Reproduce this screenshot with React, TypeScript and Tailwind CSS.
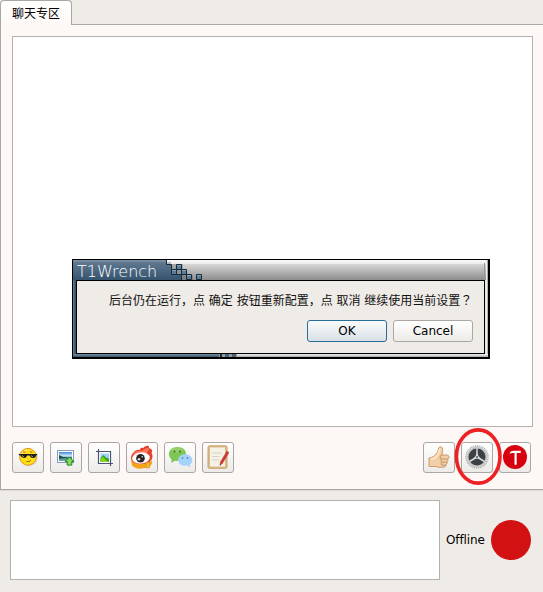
import type { ReactNode } from 'react';

function ToolButton({ children }: { children: ReactNode }) {
  return (
    <button className="flex h-[31px] w-8 shrink-0 items-start justify-center rounded-[3px] border border-[#a9a6a3] bg-linear-to-b from-white to-[#edebe8]">
      {children}
    </button>
  );
}

function CoolFace() {
  return (
    <svg className="mt-1" width="20" height="20" viewBox="0 0 20 20">
      <ellipse cx="11" cy="11" rx="8.8" ry="8.3" fill="#dcd5cd" />
      <circle cx="10" cy="9.800" r="8.400" fill="#ffdf16" stroke="#e39a20" strokeWidth="1" />
      <path d="M4 6Q6 2.500 11 2.500Q7 4 6 6.500Z" fill="#fff68b" />
      <path d="M5 5h2.500M12 5h2.500" stroke="#c0501c" strokeWidth="1" />
      <path d="M.8 7h18.400v1.300h-1q-.6 2.800-3.500 2.800-2.400 0-3-2.500H9.200q-.8 2.500-3.300 2.500-2.600 0-3.500-2.800h-1.600z" fill="#1c1c1c" />
      <path d="M4 8.500l2 1.500M13 8.500l2 1.500" stroke="#a8a8a8" strokeWidth=".9" />
      <path d="M8.500 14.500q3.500.6 4.500-1.500" fill="none" stroke="#b05a10" strokeWidth="1" />
    </svg>
  );
}

function PictureUpload() {
  return (
    <svg className="mt-[7px]" width="18" height="16" viewBox="0 0 18 16">
      <defs>
        <linearGradient id="sky" x2="0" y2="1">
          <stop stopColor="#3e86da" />
          <stop offset=".45" stopColor="#d8eef6" />
          <stop offset=".6" stopColor="#3a7a80" />
          <stop offset="1" stopColor="#76afb6" />
        </linearGradient>
      </defs>
      <rect x=".5" y=".5" width="16" height="12" fill="#fff" stroke="#8998b9" />
      <rect x="2" y="2" width="13" height="9" fill="url(#sky)" />
      <path d="M2 5l4 2 5 .8-9 .7z" fill="#174c4b" />
      <path d="M12.500 7l4.300 4.400h-2v3.700h-4.600v-3.700h-2z" fill="#86da5c" stroke="#218520" />
    </svg>
  );
}

function CropPicture() {
  return (
    <svg className="mt-[6px]" width="17" height="17" viewBox="0 0 17 17">
      <rect x="3" y="3" width="11" height="11" fill="#fff" />
      <rect x="4.500" y="4.500" width="8.500" height="8.500" fill="#9ed0fb" />
      <path d="M4.500 9l3-3 3 3 1-.5 1.500 2V13H4.500z" fill="#35a718" />
      <path d="M4.500 10l3-2 2 3 3.500 2H4.500z" fill="#8bd51d" />
      <path d="M2.500 0v14.500H17M0 2.500h14.500V17" fill="none" stroke="#4b5377" strokeWidth="1.200" />
    </svg>
  );
}

function Weibo() {
  return (
    <svg className="mt-[2px]" width="24" height="25" viewBox="0 0 24 25">
      <path d="M1 15Q7 21 15 18L22 16Q23 20 18 22.500Q6 25.500 2 20.500Z" fill="#f3a41b" />
      <path d="M3 8Q6 4 10 5Q10 2 13 3Q16 0 19 1Q18 3 21 4Q23 5 21.500 8Q23.500 11 21.500 15Q18 19 11 19Q2 19 1 14Q1 10 3 8Z" fill="#e5402a" />
      <path d="M4 8Q7 5 12 6Q17 1 19 4L17 8Q9 6 3 12Z" fill="#ff7859" />
      <path d="M16 17.500h3.500V23H16z" fill="#f8b52c" stroke="#d08a1a" strokeWidth=".5" />
      <ellipse cx="11" cy="13" rx="8.900" ry="5.600" fill="#fff" transform="rotate(-6 11 13)" />
      <circle cx="10.500" cy="13.200" r="4.300" fill="#292323" />
      <circle cx="9" cy="14.200" r="1.300" fill="#ddd" />
      <circle cx="12.200" cy="11.800" r=".8" fill="#ddd" />
    </svg>
  );
}

function Wechat() {
  return (
    <svg className="mt-[3px]" width="25" height="22" viewBox="0 0 25 22">
      <path d="M9.500 1C14.800 1 18 4 18 8.200S14 15 9.500 15l-2.700-.3L3 17l.7-3.500C1.800 12.200 1 10.500 1 8.100 1 4 4.400 1 9.500 1z" fill="#7fc653" />
      <ellipse cx="9" cy="4" rx="6" ry="2.500" fill="#a2da78" opacity=".6" />
      <path d="M17 8.300c4.500 0 7.300 2.500 7.300 5.800 0 2-.9 3.600-2.400 4.600l.6 2.600-3-1.700c-5.700.9-9.300-1.700-9.300-5.400 0-3.400 3-5.900 6.800-5.900z" fill="#a6d3fa" />
      <g fill="#3a5a30"><circle cx="6.500" cy="5.500" r=".9" /><circle cx="12" cy="5.500" r=".9" /></g>
      <g fill="#3a6288"><circle cx="14.500" cy="12" r=".8" /><circle cx="19.500" cy="12" r=".8" /></g>
    </svg>
  );
}

function NotePad() {
  return (
    <svg className="mt-[2px]" width="23" height="24" viewBox="0 0 23 24">
      <rect x="1" y=".8" width="19" height="22.500" rx="1.500" fill="#dcbb8d" stroke="#c8a06c" />
      <path d="M3 2.500h15v19H3z" fill="#f6f1e5" />
      <path d="M5.500 8h9M5.500 11.500h7M5.500 15h7" stroke="#cfc9bd" strokeWidth="1" strokeDasharray="2 .6" />
      <path d="M19.900 6.200l2.100 1.200-6.400 10.800-2.600 2 .4-3.300z" fill="#cf3833" stroke="#a92c29" strokeWidth=".4" />
      <path d="M12.700 20.700l.4-1.800 1.100.7z" fill="#443" />
    </svg>
  );
}

function ThumbUp() {
  return (
    <svg className="mt-[3px]" width="22" height="23" viewBox="0 0 22 23">
      <path d="M1 12q3-.5 5-1.700Q10 7 10.500 3 10.700.8 12.300.8q3 0 2.300 4.700L14 9h5q2 .3 2 2t-1.300 2q1 1.500-.7 3 .7 1.800-1 2.800.2 2-2.300 2.400-4.700.6-8.700-.8L1 20.500z" fill="#f3cfa8" stroke="#c08c5c" strokeWidth=".8" />
      <path d="M3 13q5-.5 7-4.500l2-6" fill="none" stroke="#ffe4c4" strokeWidth="1.800" />
      <path d="M14 9q-2 .5-2 2t2 2h5.500M13.500 13q-1.500 1.600.3 3.200H19M13.500 16.400q-1.200 1.600.5 2.800h4" fill="none" stroke="#c08a58" strokeWidth=".9" />
    </svg>
  );
}

function GearWheel() {
  return (
    <svg className="mt-[2px]" width="24" height="24" viewBox="0 0 24 24">
      <circle cx="12" cy="12" r="11" fill="none" stroke="#adadad" strokeWidth="1.400" strokeDasharray="1.200 .7" />
      <circle cx="12" cy="12" r="9.400" fill="#3e4144" stroke="#c6c6c6" strokeWidth="1.800" />
      <path d="M12 3V12L4.500 16.500M12 12l7.500 4.500" fill="none" stroke="#d8d8d8" strokeWidth="1.500" />
      <path d="M12 7.500l1.500 3.500 2.600 3.300-4.100-.8-4.100.8 2.600-3.300z" fill="#dcdcdc" />
      <circle cx="12" cy="12" r="1" fill="#54575a" />
    </svg>
  );
}

function HammerBadge() {
  return (
    <svg className="mt-[2px]" width="24" height="24" viewBox="0 0 24 24">
      <circle cx="12" cy="12" r="12" fill="#d7000f" />
      <path d="M6.500 8.800Q7.300 5.700 10.500 5.700h7.200v2.200h-4v11q0 1.100-1.100 1.100t-1.100-1.100v-11h-1.700Q7.800 7.900 6.500 8.800Z" fill="#fff" />
    </svg>
  );
}

function TitleDecoration() {
  return (
    <svg className="h-5 w-[415px]" viewBox="0 0 415 20">
      <defs>
        <linearGradient id="silver" x2="0" y2="1">
          <stop stopColor="#fafafa" /><stop offset=".18" stopColor="#ededed" />
          <stop offset=".22" stopColor="#d6d6d6" /><stop offset="1" stopColor="#8c8c8c" />
        </linearGradient>
        <linearGradient id="steel" x2="0" y2="1">
          <stop stopColor="#8295a9" /><stop offset=".15" stopColor="#5d768e" /><stop offset="1" stopColor="#36546e" />
        </linearGradient>
      </defs>
      <rect width="415" height="20" fill="url(#silver)" />
      <path d="M94 2h4v2h12v6h4v5h6v5H98z" fill="#555" opacity=".35" />
      <path d="M0 0h93v4h5v5h5v5h5v6H0z" fill="url(#steel)" />
      <path d="M93.500 0v4.500h5v5M103.500 14.500h5V20" fill="none" stroke="#142b3c" />
      <rect x="104" y="10" width="4" height="4" fill="#8d9196" />
      <g fill="#5c7b95" stroke="#142b3c">
        <path d="M103.500 4.500h5v5h-5zM98.500 9.500h5v5h-5zM108.500 9.500h5v5h-5zM113.500 14.500h5v5h-5zM123.500 14.500h5v5h-5z" />
      </g>
      <path d="M104 5.500h4M99 10.500h4M109 10.500h4M114 15.500h4M124 15.500h4" stroke="#8aa6bc" />
      <path d="M411.500 3v17" stroke="#999" /><path d="M413.500 0v20" stroke="#f0f0f0" /><path d="M414.500 0v20" stroke="#aaa" />
    </svg>
  );
}

function Dialog() {
  return (
    <section className="absolute left-[72px] top-[259px] h-[100px] w-[418px] border-y border-l border-r-2 border-b-2 border-black bg-[#bcbcbc]">
      <header className="relative h-5">
        <div className="absolute left-0 top-0"><TitleDecoration /></div>
        <h1 className="relative whitespace-nowrap pl-1 pt-0.5 font-['DejaVu_Sans'] text-[16px] font-extralight leading-5 text-white">T1Wrench</h1>
      </header>
      <div className="flex h-[74px]">
        <div className="w-[3px] bg-linear-to-r from-[#6f879b] via-[#3f607a] to-[#355169]" />
        <div className="flex w-[409px] flex-col border border-black bg-[#efebe7]">
          <p className="mt-[12px] h-4 whitespace-nowrap pl-8 text-[12px] leading-4 text-[#111]">
            后台仍在运行，点 确定 按钮重新配置，点 取消 继续使用当前设置<span lang="zh-TW" className="font-['DejaVu_Sans','Noto_Sans_CJK_TC',sans-serif]">？</span>
          </p>
          <div className="mr-[11px] mt-[11px] flex justify-end gap-[6px] font-['DejaVu_Sans'] text-[12px] leading-none text-black">
            <button className="h-[22px] w-20 rounded-[3px] border border-[#286c9a] bg-linear-to-b from-[#fafbfc] to-[#d9e0e5]">OK</button>
            <button className="h-[22px] w-20 rounded-[3px] border border-[#aaa7a4] bg-linear-to-b from-white to-[#edebe8]">Cancel</button>
          </div>
        </div>
        <div className="w-[3px] bg-linear-to-r from-[#ddd] via-[#f0f0f0] to-[#999]" />
      </div>
      <div className="flex h-[3px]">
        <div className="w-[146px] bg-linear-to-b from-[#7890a3] to-[#36546d]" />
        <div className="flex w-[18px] gap-[3px] bg-[#999] pl-[1px]"><i className="w-[2px] bg-[#142b3c]" /><i className="w-[4px] bg-[#46647d]" /><i className="w-[4px] bg-[#46647d]" /></div>
        <div className="flex-1 bg-linear-to-b from-[#f5f5f5] to-[#aaa]" />
      </div>
    </section>
  );
}

export default function App() {
  return (
    <main className="relative flex h-[592px] w-[543px] flex-col overflow-hidden bg-[#efebe7] font-['DejaVu_Sans','Noto_Sans_CJK_SC',sans-serif]">
      <nav className="flex h-[25px]">
        <div className="z-10 w-[72px] rounded-t-[4px] border border-b-0 border-[#aaa6a2] bg-linear-to-b from-white to-[#fdf8f5] pl-[11px] pt-[5px] text-[12px] leading-4 text-black">聊天专区</div>
        <div className="flex-1 border-b border-[#aaa6a2]" />
      </nav>
      <section className="flex h-[465px] flex-col border-b border-l border-[#aaa6a2] bg-[#fdf8f5] pl-[11px] pr-[10px] pt-[11px] shadow-[0_1px_0_#dedad7]">
        <div className="h-[391px] shrink-0 border border-[#b5b1ae] bg-white" />
        <div className="-mr-0.5 mt-[15px] flex justify-between pr-[4px]">
          <div className="flex gap-[6px]">
            <ToolButton><CoolFace /></ToolButton>
            <ToolButton><PictureUpload /></ToolButton>
            <ToolButton><CropPicture /></ToolButton>
            <ToolButton><Weibo /></ToolButton>
            <ToolButton><Wechat /></ToolButton>
            <ToolButton><NotePad /></ToolButton>
          </div>
          <div className="flex gap-[6px]">
            <ToolButton><ThumbUp /></ToolButton>
            <ToolButton><GearWheel /></ToolButton>
            <ToolButton><HammerBadge /></ToolButton>
          </div>
        </div>
      </section>
      <footer className="flex flex-1 items-start pl-[10px] pt-[10px]">
        <div className="h-20 w-[430px] border border-[#b5b1ae] bg-white" />
        <span className="ml-[6px] mt-[32px] w-[45px] font-['DejaVu_Sans'] text-[12px] leading-4 tracking-[-0.1px] text-black">Offline</span>
        <div className="mt-5 size-10 rounded-full bg-[#d21113]" />
      </footer>
      <Dialog />
      <svg className="absolute left-[453px] top-[426px]" width="50" height="60" viewBox="0 0 50 60">
        <ellipse cx="25.200" cy="30.500" rx="21.800" ry="26.600" fill="none" stroke="#ed2024" strokeWidth="3.600" />
      </svg>
    </main>
  );
}
